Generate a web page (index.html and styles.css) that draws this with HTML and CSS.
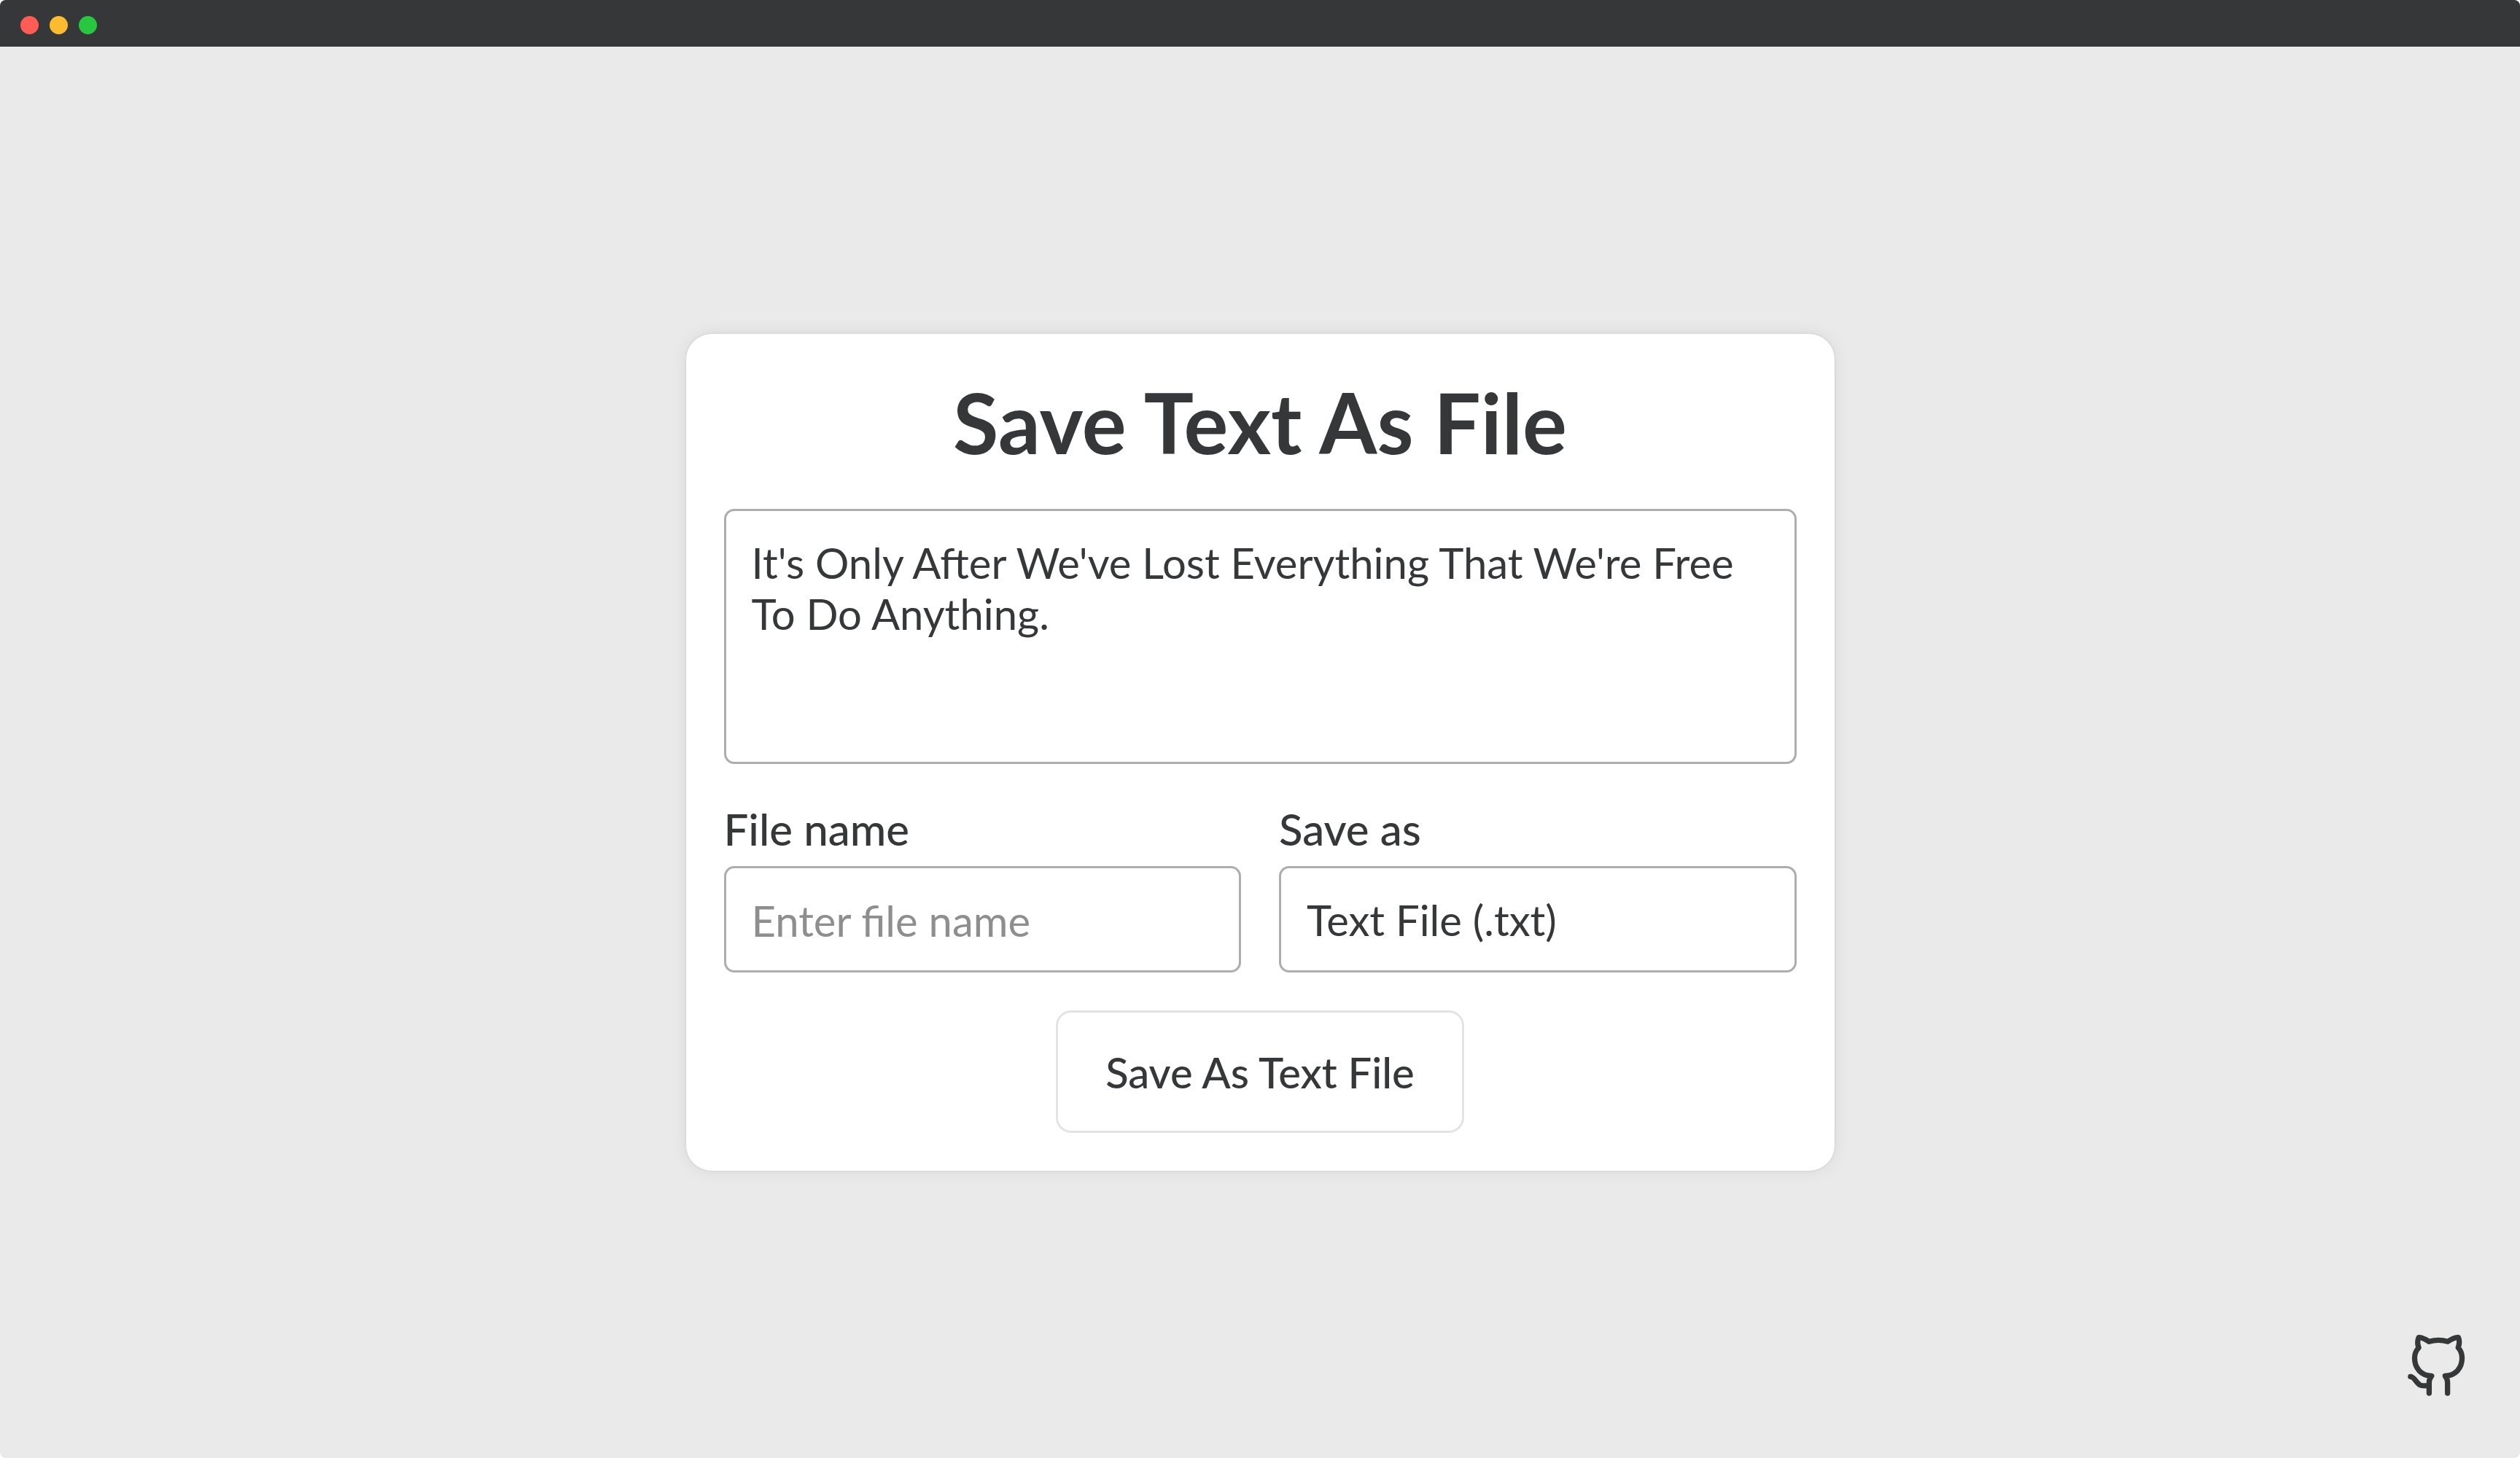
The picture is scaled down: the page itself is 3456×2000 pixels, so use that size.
FILE: index.html
```html
<!DOCTYPE html>
<html lang="en">
<head>
<meta charset="utf-8">
<meta name="viewport" content="width=device-width, initial-scale=1">
<title>Save Text As File</title>
<link rel="stylesheet" href="styles.css">
</head>
<body>
<div class="window">
  <header class="titlebar">
    <span class="dot dot-close"></span>
    <span class="dot dot-minimize"></span>
    <span class="dot dot-zoom"></span>
  </header>
  <main class="stage">
    <form class="card">
      <h1 class="title">Save Text As File</h1>
      <textarea class="control text" aria-label="Text to save" spellcheck="false" required>It's Only After We've Lost Everything That We're Free To Do Anything.</textarea>
      <div class="options">
        <div class="field">
          <label class="label" for="file-name">File name</label>
          <input class="control" id="file-name" type="text" placeholder="Enter file name">
        </div>
        <div class="field">
          <label class="label" for="save-as">Save as</label>
          <select class="control" id="save-as">
            <option value="text/plain">Text File (.txt)</option>
          </select>
        </div>
      </div>
      <button class="save" type="button">Save As Text File</button>
    </form>
  </main>
  <a class="github" href="https://github.com" aria-label="GitHub">
    <svg class="github-icon" viewBox="139 152 237 253" fill="none" stroke="currentColor" stroke-width="22" stroke-linecap="round" stroke-linejoin="round" aria-hidden="true">
      <path d="M227 393V348C227 338 230 331 237 322C194 320 167 290 167 248C167 231 173 217 184 205C179 192 178 177 184 163C197 162 211 170 227 180C251 173 280 173 304 180C319 170 334 162 348 163C353 177 352 192 347 205C358 217 363 231 363 248C363 290 336 320 293 322C300 331 303 338 303 348V393"/>
      <path d="M150 325C167 326 174 352 191 360C202 364 214 362 227 362"/>
    </svg>
  </a>
</div>
</body>
</html>
```

FILE: styles.css
```css
*,
*::before,
*::after {
  box-sizing: border-box;
}

body {
  margin: 0;
  background: #fff;
  color: #363739;
  font-family: Lato, "Liberation Sans", sans-serif;
  font-size: 58px;
  line-height: 70px;
}

.window {
  display: flex;
  flex-direction: column;
  min-height: 100vh;
  overflow: hidden;
  background: #eaeaea;
  border-radius: 8px;
}

.titlebar {
  display: flex;
  align-items: center;
  gap: 15px;
  height: 64px;
  padding: 4px 28px 0;
  background: #363739;
}

.dot {
  width: 25px;
  height: 25px;
  border-radius: 50%;
}

.dot-close {
  background: #ff5c55;
}

.dot-minimize {
  background: #fdbb2f;
}

.dot-zoom {
  background: #27c840;
}

.stage {
  display: flex;
  flex: 1;
  align-items: center;
  justify-content: center;
}

.card {
  display: flex;
  flex-direction: column;
  width: 100%;
  max-width: 1575px;
  padding: 52px;
  background: #fff;
  border-radius: 35px;
  box-shadow: 0 0 3px rgba(0, 0, 0, 0.12), 0 0 24px rgba(0, 20, 10, 0.08);
}

.title {
  margin: 0 0 50px;
  font-size: 114px;
  font-weight: 700;
  line-height: 138px;
  text-align: center;
}

.control {
  display: block;
  width: 100%;
  height: 146px;
  padding: 36px 35px 34px;
  border: 3px solid #adadad;
  border-radius: 14px;
  background: #fff;
  color: inherit;
  font: inherit;
  appearance: none;
  outline: none;
}

.control::placeholder {
  color: #8e8e8e;
  opacity: 1;
}

.text {
  height: 350px;
  resize: none;
}

.options {
  display: flex;
  gap: 52px;
  margin: 52px 0;
}

.field {
  display: flex;
  flex: 1;
  flex-direction: column;
  gap: 14px;
}

.label {
  font-size: 60px;
  font-weight: 500;
  line-height: 74px;
}

.save {
  align-self: center;
  padding: 47px 65px 45px;
  border: 3px solid #e3e3e3;
  border-radius: 21px;
  background: #fff;
  color: inherit;
  font: inherit;
  font-weight: 500;
}

.github {
  position: fixed;
  right: 75px;
  bottom: 85px;
  display: flex;
  color: inherit;
}

.github-icon {
  width: 79px;
  height: 84px;
}
```
